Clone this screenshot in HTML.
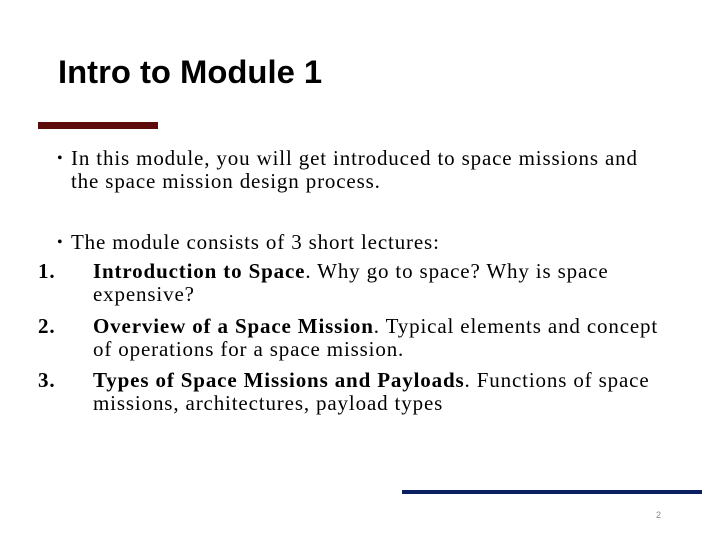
<html><head><style>
body{margin:0;width:720px;height:540px;background:#fff;position:relative;overflow:hidden}
.t{position:absolute;left:58px;top:53px;font:bold 32.8px "Liberation Sans",sans-serif;color:#000}
.r{position:absolute;left:38px;top:122px;width:120px;height:7px;background:#5c0a0a}
.b{position:absolute;left:402px;top:490px;width:300px;height:4px;background:#0a2060}
.n{position:absolute;left:656px;top:510px;font:9px "Liberation Sans",sans-serif;color:#888}
.l{position:absolute;font:21px "Liberation Serif",serif;color:#000;white-space:nowrap;line-height:23px;letter-spacing:0.85px}
</style></head><body>
<div class="t">Intro to Module 1</div>
<div class="r"></div>
<div class="l" style="left:57px;top:147px;font-size:16px">•</div>
<div class="l" style="left:71px;top:147px">In this module, you will get introduced to space missions and<br>the space mission design process.</div>
<div class="l" style="left:57px;top:231px;font-size:16px">•</div>
<div class="l" style="left:71px;top:231px">The module consists of 3 short lectures:</div>
<div class="l" style="left:38px;top:260px"><b>1.</b></div>
<div class="l" style="left:93px;top:260px"><b>Introduction to Space</b>. Why go to space? Why is space<br>expensive?</div>
<div class="l" style="left:38px;top:315px"><b>2.</b></div>
<div class="l" style="left:93px;top:315px"><b>Overview of a Space Mission</b>. Typical elements and concept<br>of operations for a space mission.</div>
<div class="l" style="left:38px;top:369px"><b>3.</b></div>
<div class="l" style="left:93px;top:369px"><b>Types of Space Missions and Payloads</b>. Functions of space<br>missions, architectures, payload types</div>
<div class="b"></div>
<div class="n">2</div>
</body></html>
